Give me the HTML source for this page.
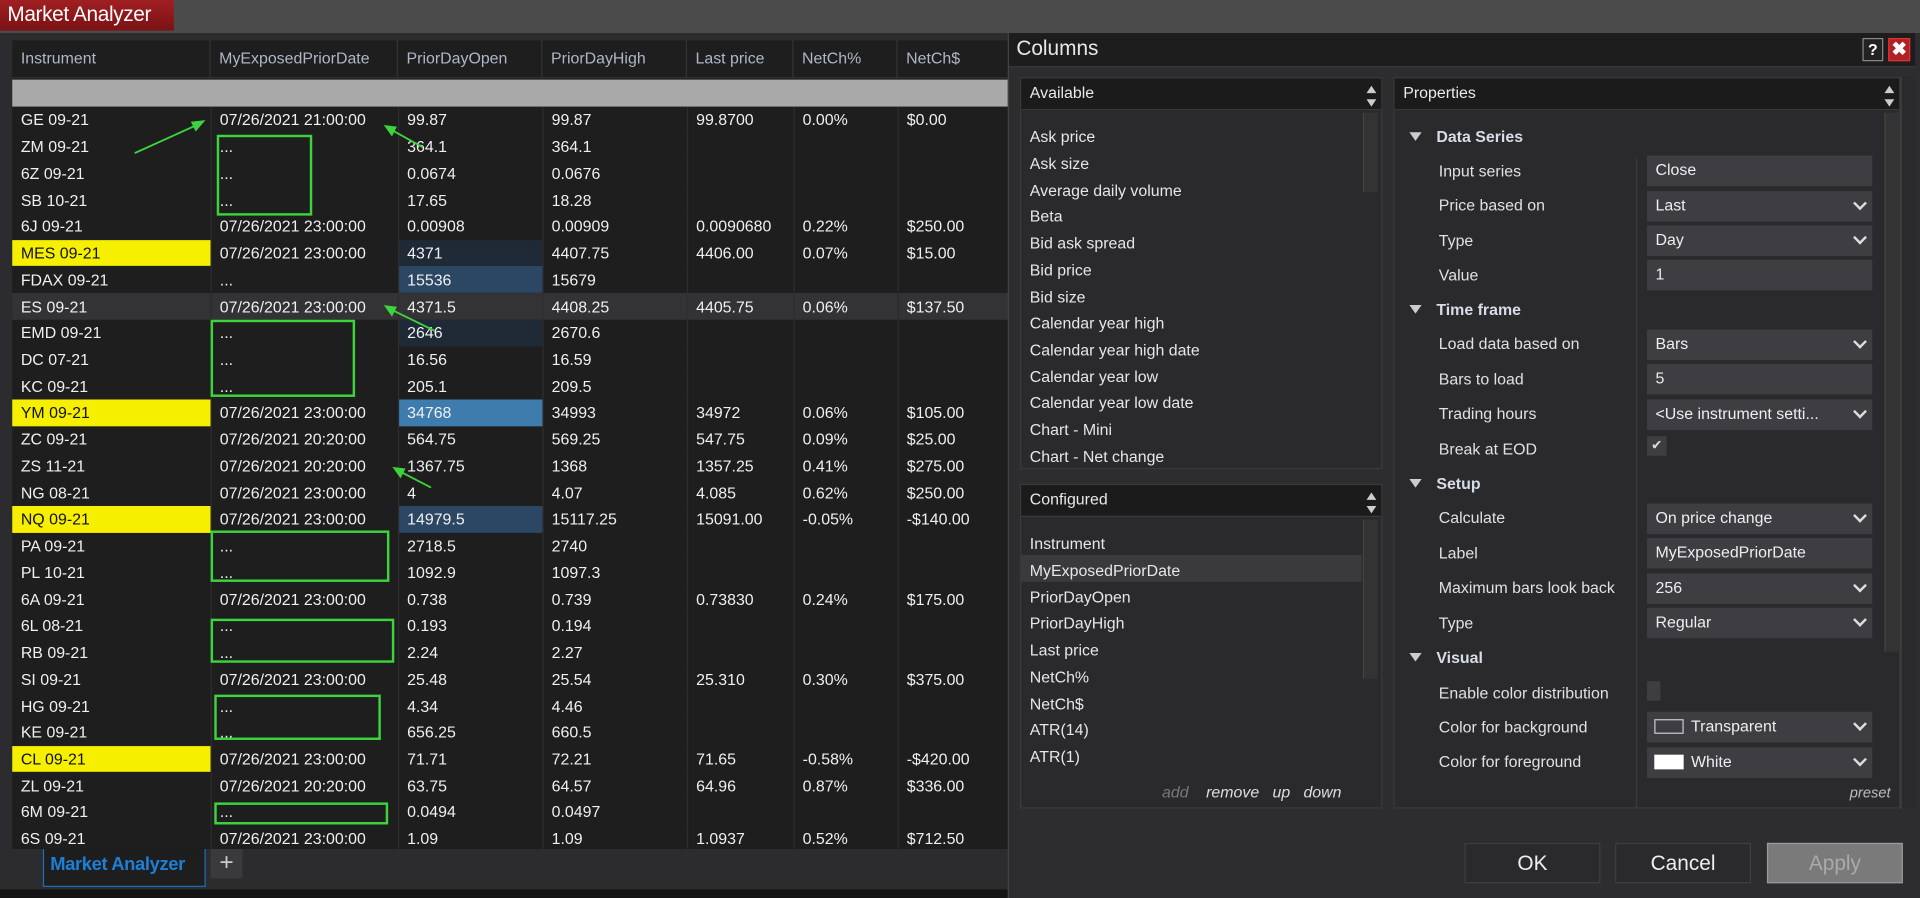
<!DOCTYPE html>
<html><head><meta charset="utf-8">
<style>
*{margin:0;padding:0;box-sizing:border-box}
html,body{width:1920px;height:898px;overflow:hidden;background:#0d0d0d}
#s{position:absolute;left:0;top:0;width:1568px;height:733px;transform:scale(1.22449,1.2251);transform-origin:0 0;font-family:"Liberation Sans",sans-serif;font-size:13px;color:#f0f0f0;background:#2c2c2e;overflow:hidden}
.a{position:absolute}
#top{left:0;top:0;width:1568px;height:27px;background:#4b4b4b}
#title{left:0;top:0;width:142px;height:25px;background:linear-gradient(#a01f22,#7a1214);color:#fff;font-size:17px;padding:2px 0 0 6px;letter-spacing:-0.3px}
#tbl{left:10px;top:33px;width:820px;height:660px;background:#1e1e1e}
table{border-collapse:collapse;table-layout:fixed;position:absolute;left:10px;top:87px;width:820px}
td{height:21.74px;padding:0 0 0 7px;white-space:nowrap;overflow:hidden;border-right:1px solid #2e2e2e;line-height:21px}
.hd{position:absolute;top:33px;height:31px;line-height:29px;color:#aeb6c8;padding-left:7px;border-right:1px solid #333;border-bottom:1px solid #333}
.y{background:#f6f000;color:#111}
.es td{background:#333335}
.b1{background:#1f2a36}.b2{background:#2b4763}.b3{background:#3e7cad}
.gb{position:absolute;border:2px solid #3dd33d}
#dlg{left:823px;top:27px;width:745px;height:706px;background:#2d2d30;border-left:1px solid #444}
.pn{position:absolute;background:#2a2a2c;border:1px solid #3a3a3c}
.ph{position:absolute;left:0;top:0;right:0;height:26px;background:#1b1b1b;color:#e8e8e8;padding:4px 0 0 7px;font-size:13px;border-bottom:1px solid #3a3a3c}
.li{position:absolute;left:7px;color:#e6e6e6}
.pl{position:absolute;left:36px;color:#e0e0e0}
.sec{position:absolute;left:12px;font-weight:bold;color:#d8dce6}
.sec:before{content:"";display:inline-block;border-left:5px solid transparent;border-right:5px solid transparent;border-top:7px solid #ccc;margin-right:12px;vertical-align:1px}
.fv{position:absolute;left:206px;width:184px;height:25px;background:#3d3d42;padding:4px 0 0 7px;color:#eee}
.dd:after{content:"";position:absolute;right:6px;top:6px;width:6px;height:6px;border-right:2px solid #ddd;border-bottom:2px solid #ddd;transform:rotate(45deg)}
.btn{position:absolute;top:661px;width:111px;height:33px;background:#2a2a2c;border:1px solid #3f3f41;text-align:center;line-height:31px;font-size:17px;color:#eee}
.sb{position:absolute;width:12px;background:#333;border-left:1px solid #444}
.arr{position:absolute;right:4px;width:0;height:0;border-left:4px solid transparent;border-right:4px solid transparent}
</style></head><body>
<div id="s">
<div class="a" id="top"></div>
<div class="a" id="title">Market Analyzer</div>
<div class="a" id="tbl"></div>
<div class="hd" style="left:10px;width:162px">Instrument</div>
<div class="hd" style="left:172px;width:153px">MyExposedPriorDate</div>
<div class="hd" style="left:325px;width:118px">PriorDayOpen</div>
<div class="hd" style="left:443px;width:118px">PriorDayHigh</div>
<div class="hd" style="left:561px;width:87px">Last price</div>
<div class="hd" style="left:648px;width:85px">NetCh%</div>
<div class="hd" style="left:733px;width:97px">NetCh$</div>
<div class="a" style="left:10px;top:65px;width:820px;height:22px;background:#a9a9a9"></div>
<table>
<colgroup><col style="width:162px"><col style="width:153px"><col style="width:118px"><col style="width:118px"><col style="width:87px"><col style="width:85px"><col style="width:97px"></colgroup>
<tr><td>GE 09-21</td><td>07/26/2021 21:00:00</td><td>99.87</td><td>99.87</td><td>99.8700</td><td>0.00%</td><td>$0.00</td></tr>
<tr><td>ZM 09-21</td><td>...</td><td>364.1</td><td>364.1</td><td></td><td></td><td></td></tr>
<tr><td>6Z 09-21</td><td>...</td><td>0.0674</td><td>0.0676</td><td></td><td></td><td></td></tr>
<tr><td>SB 10-21</td><td>...</td><td>17.65</td><td>18.28</td><td></td><td></td><td></td></tr>
<tr><td>6J 09-21</td><td>07/26/2021 23:00:00</td><td>0.00908</td><td>0.00909</td><td>0.0090680</td><td>0.22%</td><td>$250.00</td></tr>
<tr><td class="y">MES 09-21</td><td>07/26/2021 23:00:00</td><td class="b1">4371</td><td>4407.75</td><td>4406.00</td><td>0.07%</td><td>$15.00</td></tr>
<tr><td>FDAX 09-21</td><td>...</td><td class="b2">15536</td><td>15679</td><td></td><td></td><td></td></tr>
<tr class="es"><td>ES 09-21</td><td>07/26/2021 23:00:00</td><td>4371.5</td><td>4408.25</td><td>4405.75</td><td>0.06%</td><td>$137.50</td></tr>
<tr><td>EMD 09-21</td><td>...</td><td class="b1">2646</td><td>2670.6</td><td></td><td></td><td></td></tr>
<tr><td>DC 07-21</td><td>...</td><td>16.56</td><td>16.59</td><td></td><td></td><td></td></tr>
<tr><td>KC 09-21</td><td>...</td><td>205.1</td><td>209.5</td><td></td><td></td><td></td></tr>
<tr><td class="y">YM 09-21</td><td>07/26/2021 23:00:00</td><td class="b3">34768</td><td>34993</td><td>34972</td><td>0.06%</td><td>$105.00</td></tr>
<tr><td>ZC 09-21</td><td>07/26/2021 20:20:00</td><td>564.75</td><td>569.25</td><td>547.75</td><td>0.09%</td><td>$25.00</td></tr>
<tr><td>ZS 11-21</td><td>07/26/2021 20:20:00</td><td>1367.75</td><td>1368</td><td>1357.25</td><td>0.41%</td><td>$275.00</td></tr>
<tr><td>NG 08-21</td><td>07/26/2021 23:00:00</td><td>4</td><td>4.07</td><td>4.085</td><td>0.62%</td><td>$250.00</td></tr>
<tr><td class="y">NQ 09-21</td><td>07/26/2021 23:00:00</td><td class="b2">14979.5</td><td>15117.25</td><td>15091.00</td><td>-0.05%</td><td>-$140.00</td></tr>
<tr><td>PA 09-21</td><td>...</td><td>2718.5</td><td>2740</td><td></td><td></td><td></td></tr>
<tr><td>PL 10-21</td><td>...</td><td>1092.9</td><td>1097.3</td><td></td><td></td><td></td></tr>
<tr><td>6A 09-21</td><td>07/26/2021 23:00:00</td><td>0.738</td><td>0.739</td><td>0.73830</td><td>0.24%</td><td>$175.00</td></tr>
<tr><td>6L 08-21</td><td>...</td><td>0.193</td><td>0.194</td><td></td><td></td><td></td></tr>
<tr><td>RB 09-21</td><td>...</td><td>2.24</td><td>2.27</td><td></td><td></td><td></td></tr>
<tr><td>SI 09-21</td><td>07/26/2021 23:00:00</td><td>25.48</td><td>25.54</td><td>25.310</td><td>0.30%</td><td>$375.00</td></tr>
<tr><td>HG 09-21</td><td>...</td><td>4.34</td><td>4.46</td><td></td><td></td><td></td></tr>
<tr><td>KE 09-21</td><td>...</td><td>656.25</td><td>660.5</td><td></td><td></td><td></td></tr>
<tr><td class="y">CL 09-21</td><td>07/26/2021 23:00:00</td><td>71.71</td><td>72.21</td><td>71.65</td><td>-0.58%</td><td>-$420.00</td></tr>
<tr><td>ZL 09-21</td><td>07/26/2021 20:20:00</td><td>63.75</td><td>64.57</td><td>64.96</td><td>0.87%</td><td>$336.00</td></tr>
<tr><td>6M 09-21</td><td>...</td><td>0.0494</td><td>0.0497</td><td></td><td></td><td></td></tr>
<tr><td>6S 09-21</td><td>07/26/2021 23:00:00</td><td>1.09</td><td>1.09</td><td>1.0937</td><td>0.52%</td><td>$712.50</td></tr>
</table>
<div class="gb" style="left:177px;top:110px;width:78px;height:66px"></div>
<div class="gb" style="left:172px;top:261px;width:118px;height:63px"></div>
<div class="gb" style="left:172px;top:433px;width:146px;height:42px"></div>
<div class="gb" style="left:172px;top:505px;width:150px;height:36px"></div>
<div class="gb" style="left:175px;top:567px;width:136px;height:37px"></div>
<div class="gb" style="left:175px;top:655px;width:142px;height:18px"></div>
<svg class="a" style="left:0;top:0" width="1568" height="733">
<g stroke="#3dd33d" stroke-width="1.5" fill="#3dd33d">
<line x1="110" y1="125" x2="163" y2="101"/><polygon points="166,99 157,100 160,106"/>
<line x1="345" y1="120" x2="318" y2="105"/><polygon points="315,103 320,110 323,104"/>
<line x1="355" y1="270" x2="318" y2="252"/><polygon points="315,250 320,257 323,251"/>
<line x1="352" y1="398" x2="325" y2="384"/><polygon points="322,382 327,389 330,383"/>
<line x1="1228" y1="204" x2="1325" y2="199"/><polygon points="1330,198 1322,195 1322,202"/>
<line x1="1236" y1="231" x2="1325" y2="228"/><polygon points="1330,227 1322,224 1322,231"/>
<line x1="1286" y1="283" x2="1323" y2="287"/><polygon points="1328,288 1320,284 1320,290"/>
<line x1="1250" y1="314" x2="1317" y2="311"/><polygon points="1322,311 1314,308 1314,314"/>
</g></svg>
<!-- bottom tabs -->
<div class="a" style="left:10px;top:693px;width:813px;height:40px;background:#2c2c2e"></div>
<div class="a" style="left:0;top:726px;width:823px;height:7px;background:#141414"></div>
<div class="a" style="left:35px;top:693px;width:133px;height:31px;background:#1e1e1e;border:1px solid #1a6fc0;border-top:none;color:#1d7fd6;font-size:15px;font-weight:bold;padding:4px 0 0 5px;letter-spacing:-0.3px">Market Analyzer</div>
<div class="a" style="left:172px;top:693px;width:26px;height:24px;background:#3a3a3c;color:#ccc;font-size:20px;text-align:center;line-height:22px">+</div>
<!-- dialog -->
<div class="a" id="dlg">
<div class="a" style="left:0;top:0;width:740px;height:28px;background:#1d1d1d;border-bottom:1px solid #3a3a3a;font-size:17px;padding:3px 0 0 6px;color:#e8e8e8">Columns</div>
<div class="a" style="left:697px;top:4px;width:17px;height:19px;background:#222;border:1px solid #888;color:#fff;font-weight:bold;text-align:center;font-size:13px;line-height:17px">?</div>
<div class="a" style="left:718px;top:4px;width:18px;height:19px;background:#b02025;border:1px solid #d33;color:#fff;font-weight:bold;text-align:center;font-size:15px;line-height:17px">✖</div>
<div class="pn" style="left:9px;top:36px;width:296px;height:320px">
<div class="ph">Available</div>
<div class="arr" style="top:6px;border-bottom:6px solid #ccc"></div><div class="arr" style="top:17px;border-top:6px solid #ccc"></div>
<div class="sb" style="right:3px;top:28px;height:65px"></div>
<div class="li" style="top:40px">Ask price</div><div class="li" style="top:62px">Ask size</div><div class="li" style="top:84px">Average daily volume</div><div class="li" style="top:105px">Beta</div><div class="li" style="top:127px">Bid ask spread</div><div class="li" style="top:149px">Bid price</div><div class="li" style="top:171px">Bid size</div><div class="li" style="top:192px">Calendar year high</div><div class="li" style="top:214px">Calendar year high date</div><div class="li" style="top:236px">Calendar year low</div><div class="li" style="top:257px">Calendar year low date</div><div class="li" style="top:279px">Chart - Mini</div><div class="li" style="top:301px">Chart - Net change</div>
</div>
<div class="pn" style="left:9px;top:368px;width:296px;height:265px">
<div class="ph">Configured</div>
<div class="arr" style="top:6px;border-bottom:6px solid #ccc"></div><div class="arr" style="top:17px;border-top:6px solid #ccc"></div>
<div class="sb" style="right:3px;top:28px;height:130px"></div>
<div class="a" style="left:0;top:57px;width:278px;height:22px;background:#3a3a3c"></div>
<div class="li" style="top:40px">Instrument</div><div class="li" style="top:62px">MyExposedPriorDate</div><div class="li" style="top:84px">PriorDayOpen</div><div class="li" style="top:105px">PriorDayHigh</div><div class="li" style="top:127px">Last price</div><div class="li" style="top:149px">NetCh%</div><div class="li" style="top:171px">NetCh$</div><div class="li" style="top:192px">ATR(14)</div><div class="li" style="top:214px">ATR(1)</div>
<div class="a" style="left:115px;top:243px;font-style:italic;color:#777">add</div>
<div class="a" style="left:151px;top:243px;font-style:italic;color:#ddd">remove&nbsp;&nbsp; up&nbsp;&nbsp; down</div>
</div>
<div class="pn" style="left:314px;top:36px;width:414px;height:597px">
<div class="ph">Properties</div>
<div class="arr" style="top:6px;border-bottom:6px solid #ccc"></div><div class="arr" style="top:17px;border-top:6px solid #ccc"></div>
<div class="sb" style="right:0;top:28px;height:440px"></div>
<div class="a" style="left:197px;top:65px;width:1px;height:530px;background:#3a3a3c"></div>
<div class="sec" style="top:40px">Data Series</div>
<div class="pl" style="top:68px">Input series</div><div class="fv" style="top:63px">Close</div>
<div class="pl" style="top:96px">Price based on</div><div class="fv dd" style="top:92px">Last</div>
<div class="pl" style="top:125px">Type</div><div class="fv dd" style="top:120px">Day</div>
<div class="pl" style="top:153px">Value</div><div class="fv" style="top:148px">1</div>
<div class="sec" style="top:181px">Time frame</div>
<div class="pl" style="top:209px">Load data based on</div><div class="fv dd" style="top:205px">Bars</div>
<div class="pl" style="top:238px">Bars to load</div><div class="fv" style="top:233px">5</div>
<div class="pl" style="top:266px">Trading hours</div><div class="fv dd" style="top:262px">&lt;Use instrument setti...</div>
<div class="pl" style="top:295px">Break at EOD</div><div class="a" style="left:206px;top:292px;width:16px;height:16px;background:#3d3d42;color:#ddd;font-size:11px;text-align:center;line-height:16px">✔</div>
<div class="sec" style="top:323px">Setup</div>
<div class="pl" style="top:351px">Calculate</div><div class="fv dd" style="top:347px">On price change</div>
<div class="pl" style="top:380px">Label</div><div class="fv" style="top:375px">MyExposedPriorDate</div>
<div class="pl" style="top:408px">Maximum bars look back</div><div class="fv dd" style="top:404px">256</div>
<div class="pl" style="top:437px">Type</div><div class="fv dd" style="top:432px">Regular</div>
<div class="sec" style="top:465px">Visual</div>
<div class="pl" style="top:494px">Enable color distribution</div><div class="a" style="left:206px;top:492px;width:11px;height:16px;background:#3d3d42"></div>
<div class="pl" style="top:522px">Color for background</div><div class="fv dd" style="top:517px;padding-left:36px">Transparent<span class="a" style="left:6px;top:6px;width:24px;height:12px;border:1px solid #ccc"></span></div>
<div class="pl" style="top:550px">Color for foreground</div><div class="fv dd" style="top:546px;padding-left:36px">White<span class="a" style="left:6px;top:6px;width:24px;height:12px;background:#fff"></span></div>
<div class="a" style="right:7px;top:576px;font-style:italic;color:#bbb;font-size:12px">preset</div>
</div>
<div class="sb" style="left:728px;top:36px;height:597px;background:#2a2a2c"></div>
<div class="btn" style="left:372px">OK</div>
<div class="btn" style="left:495px">Cancel</div>
<div class="btn" style="left:619px;background:#7a7a7a;border-color:#999;color:#aaa">Apply</div>
</div>
</div>
</body></html>
